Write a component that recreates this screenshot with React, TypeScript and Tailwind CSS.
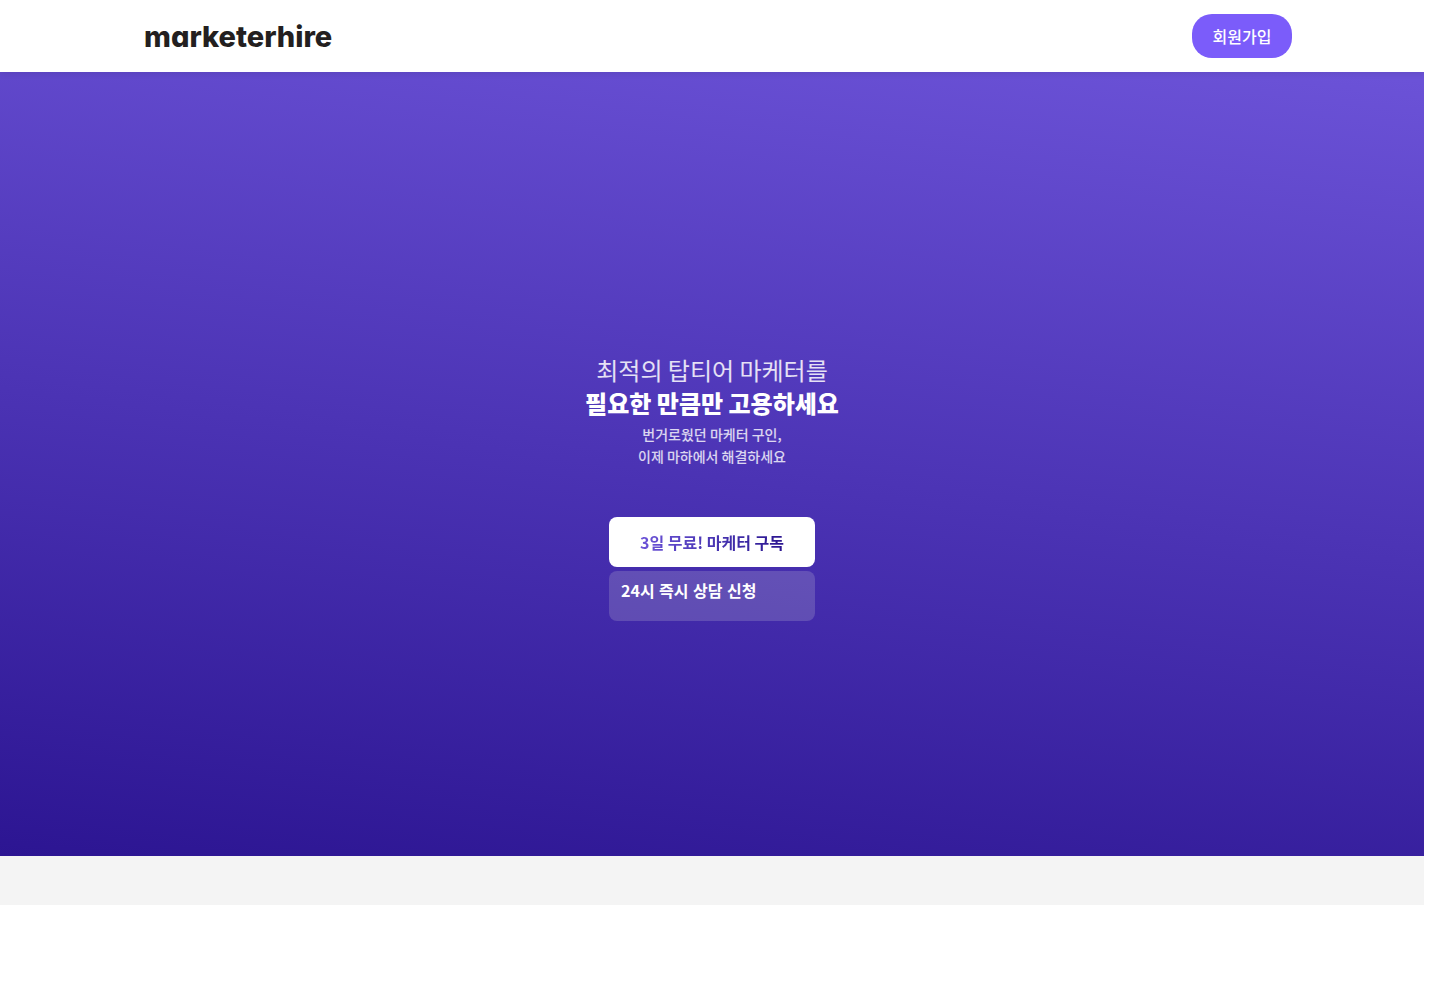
function Header() {
  return (
    <header className="relative z-10 bg-white shadow-[0_2px_6px_rgba(0,0,0,0.08)] [clip-path:inset(0_0_-12px_0)]">
      <div className="mx-auto flex h-18 max-w-[1136px] items-center justify-between">
        <a
          href="#"
          className="pt-0.5 font-['Inter',sans-serif] text-[29px] leading-9 font-extrabold text-[#231f20] [font-feature-settings:'cv11']"
        >
          marketerhire
        </a>
        <button
          type="button"
          className="-mr-3 h-11 w-25 rounded-[20px] bg-[#7b5cfa] text-base font-medium text-white"
        >
          회원가입
        </button>
      </div>
    </header>
  );
}

function Hero() {
  return (
    <main className="flex h-196 flex-col items-center justify-center bg-[linear-gradient(187deg,#6b52d7_1%,#2c1592)] pt-[46px] text-center">
      <h1 className="text-2xl leading-[33px] text-white">
        <span className="block font-normal text-white/85">최적의 탑티어 마케터를</span>
        <strong className="block font-black">필요한 만큼만 고용하세요</strong>
      </h1>
      <p className="mt-1 text-sm leading-[22px] font-medium text-white/80">
        번거로웠던 마케터 구인,
        <br />
        이제 마하에서 해결하세요
      </p>
      <div className="mt-[50px] flex w-[206px] flex-col gap-1">
        <button type="button" className="h-[50px] rounded-lg bg-white text-base font-bold">
          <span className="bg-linear-to-r from-[#6c53d8] to-[#2b1490] bg-clip-text text-transparent">
            3일 무료! 마케터 구독
          </span>
        </button>
        <button
          type="button"
          lang="ko"
          className="flex h-[50px] items-start rounded-lg bg-[#dddddd]/20 px-3 pt-[7px] text-base font-bold text-white"
        >
          24시 즉시 상담 신청
        </button>
      </div>
    </main>
  );
}

export default function App() {
  return (
    <div className="bg-white pr-4 font-['Noto_Sans_CJK_KR',sans-serif]">
      <Header />
      <Hero />
      <div className="h-[49px] bg-[#f4f4f4]" />
    </div>
  );
}
